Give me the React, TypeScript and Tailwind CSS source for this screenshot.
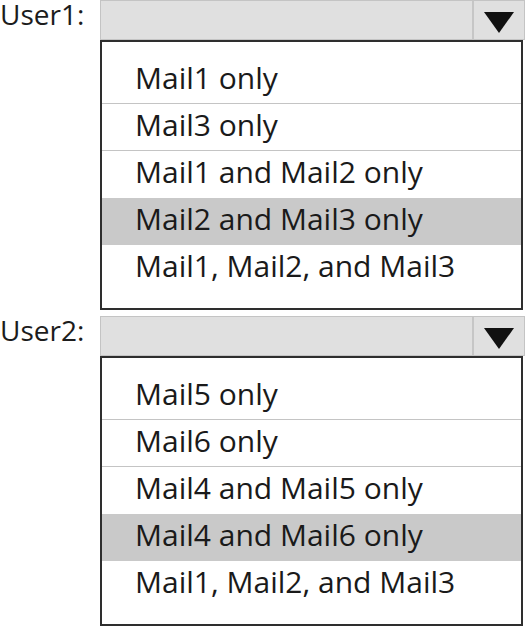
import React from 'react';

interface Question {
  label: string;
  options: string[];
  selected: number;
}

const questions: Question[] = [
  {
    label: 'User1:',
    options: ['Mail1 only', 'Mail3 only', 'Mail1 and Mail2 only', 'Mail2 and Mail3 only', 'Mail1, Mail2, and Mail3'],
    selected: 3,
  },
  {
    label: 'User2:',
    options: ['Mail5 only', 'Mail6 only', 'Mail4 and Mail5 only', 'Mail4 and Mail6 only', 'Mail1, Mail2, and Mail3'],
    selected: 3,
  },
];

function DropdownQuestion({ label, options, selected }: Question) {
  return (
    <div className="flex flex-col">
      {/* label + closed combobox */}
      <div className="flex items-start h-[40px]">
        <div className="w-[100px] shrink-0 text-[28px] leading-[28px] text-[#1c1c1c]">{label}</div>
        <div className="flex flex-1 h-[40px] bg-[#e0e0e0] border border-[#c4c4c4]">
          <div className="flex-1" />
          <div className="w-[52px] shrink-0 border-l-2 border-[#c6c6c6] flex items-center justify-center pt-[4px]">
            <svg width="30" height="21" viewBox="0 0 30 21">
              <polygon points="0,0 30,0 15,21" fill="#111" />
            </svg>
          </div>
        </div>
      </div>

      {/* open list */}
      <div className="ml-[100px] w-[423px] h-[270px] border-2 border-[#2e2e2e] bg-white pt-[15px]">
        {options.map((opt, i) => (
          <div
            key={opt}
            className={`h-[47px] pl-[33px] pt-[2px] text-[30px] leading-[38px] text-[#1a1a1a] ${
              i === selected ? 'bg-[#c9c9c9]' : ''
            } ${i < selected - 1 ? 'border-b border-[#c4c4c4]' : ''}`}
          >
            {opt}
          </div>
        ))}
      </div>
    </div>
  );
}

export default function App() {
  return (
    <div className="w-[525px] h-[626px] bg-white overflow-hidden font-['Open_Sans','Noto_Sans',sans-serif]">
      <div className="flex flex-col gap-[6px]">
        {questions.map(q => (
          <DropdownQuestion key={q.label} {...q} />
        ))}
      </div>
    </div>
  );
}
